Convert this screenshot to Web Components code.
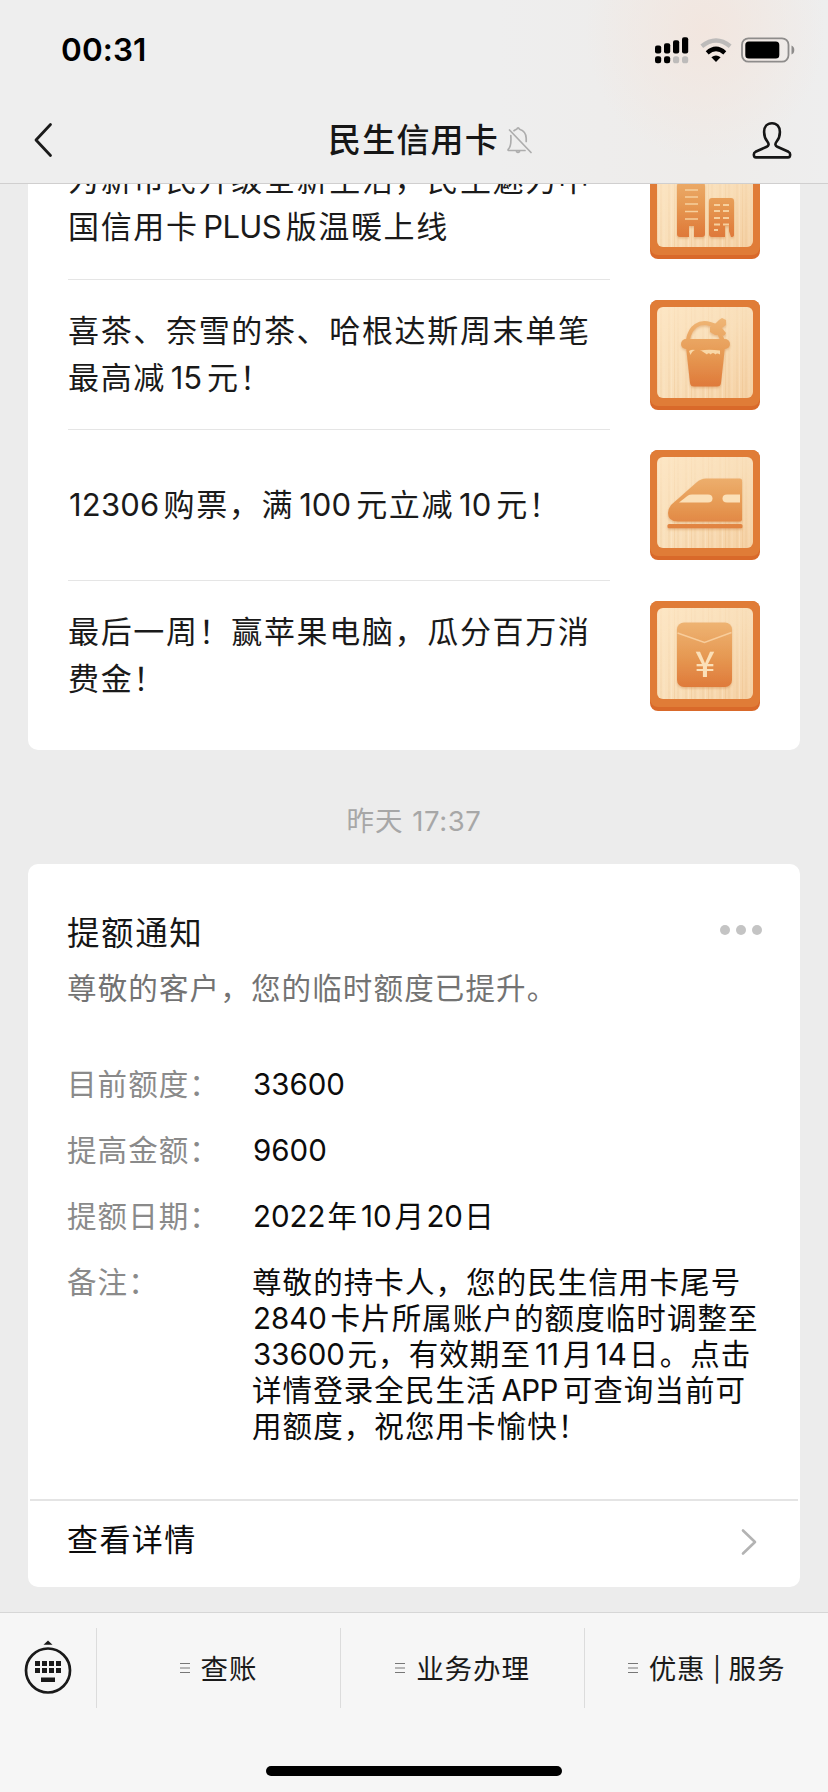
<!DOCTYPE html>
<html lang="zh-CN">
<head>
<meta charset="utf-8">
<title>民生信用卡</title>
<style>
html,body{margin:0;height:100%;overflow:hidden}
body{font-family:"Noto Sans CJK SC",Inter,sans-serif;color:#1a1a1a;background:#ececec}
</style>
</head>
<body>
<chat-screen></chat-screen>
<script>
const define=(name,html,init)=>customElements.define(name,class extends HTMLElement{
  constructor(){
    super();
    const t=document.createElement('template');
    t.innerHTML=html;
    this.attachShadow({mode:'open'}).append(t.content.cloneNode(true));
  }
  connectedCallback(){ if(init) init(this,this.shadowRoot); }
});

/* Latin or digit run inside Chinese text, with its own face and a fixed advance */
define('latin-run',`<style>
:host{display:inline-block;font-family:Inter,"Noto Sans CJK SC",sans-serif;line-height:1;white-space:nowrap;letter-spacing:var(--ls,0px);width:var(--w,auto);text-align:center}
:host([start]){text-align:left;text-indent:1px}
:host([end]){text-align:right}
</style><slot></slot>`);

define('status-bar',`<style>
:host{display:flex;justify-content:space-between;align-items:center;height:96px;padding:4px 33px 0 61px;box-sizing:border-box}
.time{font:600 31.5px/40px Inter,sans-serif;color:#000;letter-spacing:.1px;white-space:nowrap}
.icons{display:flex;align-items:center;gap:11px}
.battery{margin-left:-1.700px}
svg{display:block}
</style>
<span class="time">00:31</span>
<div class="icons">
<svg width="34" height="27" viewBox="0 0 34 27">
<g fill="#000"><rect x="0" y="8.5" width="6.2" height="8" rx="2"/><rect x="9" y="6.3" width="6.2" height="10.2" rx="2"/><rect x="18" y="3.3" width="6.2" height="13.2" rx="2"/><rect x="27" y=".3" width="6.2" height="16.2" rx="2"/><rect x="0" y="19.3" width="6.2" height="7" rx="2.2"/><rect x="9" y="19.3" width="6.2" height="7" rx="2.2"/></g>
<g fill="#bdbbba"><rect x="18" y="19.3" width="6.2" height="7" rx="2.6"/><rect x="27" y="19.3" width="6.2" height="7" rx="2.6"/></g></svg>
<svg width="32" height="25" viewBox="0 0 32 25">
<path d="M1.800 8.200Q16-3.400 30.200 8.200" fill="none" stroke="#bdbbba" stroke-width="4.400"/>
<path d="M7.200 14.800Q16 7 24.800 14.800" fill="none" stroke="#000" stroke-width="4.400"/>
<path d="M16 24L11.400 19.200Q16 15.600 20.600 19.200Z"/></svg>
<svg class="battery" width="54" height="26" viewBox="0 0 54 26"><rect x="1" y="1.300" width="46.500" height="23.400" rx="6.500" fill="none" stroke="#8e8c8b" stroke-width="1.800"/><rect x="4.300" y="4.500" width="34" height="17" rx="3.500"/><path d="M50.500 8.500q2.800 1 2.800 4.500t-2.800 4.500z" fill="#8e8c8b"/></svg>
</div>`);

define('nav-bar',`<style>
:host{display:grid;grid-template-columns:1fr auto 1fr;align-items:center;height:87px;padding:0 36px 0 34px;box-sizing:border-box}
svg{display:block}
.title{display:flex;align-items:center;gap:8px;padding-left:35px}
h1{margin:0 0 3px;font-size:33px;font-weight:500;line-height:44px;letter-spacing:1.200px;color:#161616;white-space:nowrap}
.person{justify-self:end}
</style>
<svg width="20" height="36" viewBox="0 0 20 36"><path d="M16.500 2.500L2 18l14.500 15.500" fill="none" stroke="#1a1a1a" stroke-width="2.800" stroke-linecap="round" stroke-linejoin="round"/></svg>
<div class="title"><h1><slot></slot></h1>
<svg width="26" height="28" viewBox="0 0 26 28" fill="none" stroke="#adadad" stroke-width="1.700" stroke-linecap="round" stroke-linejoin="round"><path d="M2.500 4L24 26.500M3.800 9.500C4.200 15 4.500 20.500 1.200 23.400q-.6 1.100 1 1.100H18M7 4.700Q8.500 3.700 9.600 3.300q1.500-2.800 3 0c4.800 1.700 6.600 5.500 6.600 9v3.200"/><path d="M9.500 25.700q1.500 1.300 3 0"/></svg></div>
<svg class="person" width="40" height="38" viewBox="0 0 40 38"><path d="M20 2.200c-5 0-7.900 3.800-7.900 8.700 0 4 1.500 7.500 3.400 9.900 1.800 2.200 1.200 4-.8 5L3.500 30.800C1 32 1.500 36.400 4 36.400h32c2.500 0 3-4.400.5-5.600L25.300 25.800c-2-1-2.600-2.800-.8-5 1.900-2.400 3.400-5.900 3.400-9.900 0-4.900-2.900-8.700-7.900-8.700z" fill="none" stroke="#161616" stroke-width="2.600" stroke-linejoin="round"/></svg>`);

/* Wooden tile with a carved pictogram */
const glyphs={
 city:`<path d="M27 37q0-4 4-4h20q4 0 4 4v48q0 3-3 3h-8V77h-5v11H30q-3 0-3-3z"/><path d="M59 52q0-3 3-3h19q3 0 3 3v34q0 2-3 2l-2-6V77h-4v11H62q-3 0-3-3z"/>
 <path d="M35 41h13M35 48h13M35 55h13M35 62.500h13M35 70h13" stroke="#f6cf9d" stroke-width="1.400"/><path d="M64 56h6M73 56h6M64 62h6M73 62h6M64 69h6M73 69h6M64 75.500h6M73 75.500h6M64 81h4" stroke="#f6cf9d" stroke-width="2"/>`,
 cup:`<path d="M38 40C40 26 50 21 60 24l6 2" fill="none" stroke="url(#f)" stroke-width="4"/><path d="M69 20l3-2 4 2 0 5-4 3 4 5q-1 4-5 2l-6 0-5-3 0-5 5-3z"/><path d="M69 33l4 8" stroke="url(#f)" stroke-width="4"/><rect x="31" y="39" width="49" height="10" rx="5"/><path d="M36 47h39l-4 36q-.5 3.500-4 3.500H44q-3.500 0-4-3.500z"/><path d="M39 51q3-2 6-1-3 1-4.500 5zM50 50.500q9-1.500 20 0v4q-3-2-4.500 0-2.500-3-5 0-2-2.500-3.500 0-4-3-7-4.500z" fill="#f9d8a8"/>`,
 train:`<path d="M90 28.500q2 0 2 2v39q0 2-2 2H28q-10 0-10-8.500 0-4 3-8L47 32q4-3.500 9-3.500z"/><rect x="17.500" y="74" width="75" height="4.200" rx="1.500"/><path d="M29 52.500l9-7q1.500-1 4-1h16q4.500 0 4.500 4t-4.500 4z" fill="#fbe0b8"/><path d="M90 44.500H77q-4.500 0-4.500 4t4.500 4h13z" fill="#fbe0b8"/>`,
 gift:`<rect x="27" y="21.500" width="55" height="64.500" rx="7"/><path d="M27.500 32L54.500 41.500 81.500 31.500" fill="none" stroke="#f8cd9b" stroke-width="1.500"/><text x="55" y="75.500" text-anchor="middle" font-family="Noto Sans CJK SC,sans-serif" font-size="35" font-weight="500" style="fill:#fbe0b8">¥</text>`};
define('wood-tile',`<style>:host{display:block;width:110px;height:110px}svg{display:block}</style><div></div>`,(el,root)=>{
 root.querySelector('div').innerHTML=`<svg width="110" height="110" viewBox="0 0 110 110"><defs>
 <linearGradient id="w" x2="1" y2="1"><stop stop-color="#fde6c4"/><stop offset=".5" stop-color="#f9dfba"/><stop offset="1" stop-color="#f5d0a3"/></linearGradient>
 <linearGradient id="f" gradientUnits="userSpaceOnUse" x1="0" y1="18" x2="0" y2="86"><stop stop-color="#efb676"/><stop offset=".55" stop-color="#e69953"/><stop offset="1" stop-color="#df7a3a"/></linearGradient>
 <linearGradient id="h" x2="0" y2="1"><stop stop-color="#fff" stop-opacity=".15"/><stop offset="1" stop-color="#fff"/></linearGradient>
 <mask id="m"><rect width="110" height="110" fill="url(#h)"/></mask>
 <pattern id="g" width="17" height="110" patternUnits="userSpaceOnUse"><path d="M2 0v110M7.500 0v110M11 0v110" stroke="#dfa763" stroke-width=".8" opacity=".28"/><path d="M4.500 0v110M14 0v110" stroke="#fff1d8" stroke-width="1" opacity=".35"/></pattern>
 <filter id="s" x="-20%" y="-20%" width="140%" height="140%"><feDropShadow dx="0" dy="1.500" stdDeviation="1" flood-color="#c87a3a" flood-opacity=".4"/></filter></defs>
 <rect width="110" height="110" rx="8" fill="#d9692a"/><rect width="110" height="106" rx="8" fill="#e07c37"/>
 <rect x="7" y="7" width="96" height="91" rx="6" fill="url(#w)"/><rect x="7" y="7" width="96" height="91" rx="6" fill="url(#g)" mask="url(#m)"/>
 <g fill="url(#f)" filter="url(#s)">${glyphs[el.getAttribute('kind')]}</g></svg>`;
});

define('article-row',`<style>
:host{display:flex;justify-content:space-between;align-items:center;height:150.6px;padding:0 40px;box-sizing:border-box;--line:#e5e5e5}
:host([last]){--line:transparent}
.text{align-self:stretch;width:542px;display:flex;align-items:center;padding-bottom:5px;box-sizing:border-box;border-bottom:1px solid var(--line);font-size:31px;line-height:47px;letter-spacing:1.660px;white-space:nowrap}
</style><div class="text"><div><slot></slot></div></div><slot name="tile"></slot>`);

define('chat-card',`<style>:host{display:block;margin:0 28px;background:#fff;border-radius:10px;overflow:hidden}</style><slot></slot>`);

define('time-stamp',`<style>
:host{display:flex;justify-content:center;align-items:flex-start;height:114px;padding-top:53px;box-sizing:border-box;font-size:27.500px;letter-spacing:1px;color:#a7a7a7;line-height:32px}
div{white-space:nowrap}</style><div><slot></slot></div>`);

/* Inter leads the font stack, so the line box stays within the 36px leading */
define('detail-row',`<style>
:host{display:grid;grid-template-columns:185px 1fr;font-family:Inter,"Noto Sans CJK SC",sans-serif;line-height:36px;font-size:29.500px;letter-spacing:1.080px;padding-top:2px;margin-bottom:28px;white-space:nowrap}
.k{color:#8a8a8a}.v{color:#0c0c0c}
</style><span class="k"><slot name="k"></slot></span><span class="v"><slot></slot></span>`);

define('notice-head',`<style>
:host{display:block;padding:44px 0 0}
.top{display:flex;justify-content:space-between;align-items:center;height:46px;padding-right:38px}
h2{margin:0;font-size:32.500px;font-weight:400;line-height:46px;letter-spacing:1.600px;color:#161616}
.dots{display:flex;gap:6px;padding-bottom:2px}i{width:10px;height:10px;border-radius:50%;background:#c4c4c4}
p{margin:14px 0 60px;font-size:29.500px;line-height:36px;letter-spacing:1.150px;color:#737373}
</style><div class="top"><h2><slot></slot></h2><div class="dots"><i></i><i></i><i></i></div></div><p><slot name="sub"></slot></p>`);

define('more-link',`<style>
:host{display:flex;justify-content:space-between;align-items:center;height:88px;margin:0 2px;padding:0 40px 10px 37px;box-sizing:border-box;border-top:2px solid #e4e4e4;font-size:31px;letter-spacing:1.400px;color:#0c0c0c}
span{line-height:40px;margin-top:-2px}svg{display:block;margin-top:6px}
</style><span><slot></slot></span><svg width="18" height="28" viewBox="0 0 18 28"><path d="M3 2.500L15 14 3 25.500" fill="none" stroke="#b3b3b3" stroke-width="2.600" stroke-linejoin="round" stroke-linecap="round"/></svg>`);

define('menu-item',`<style>
:host{flex:1 1 0;display:flex;justify-content:center;align-items:center;gap:11px;height:80px;border-left:1px solid #dcdcdc;box-sizing:border-box;font-size:27.500px;letter-spacing:.9px;color:#1a1a1a}
svg{display:block}span{line-height:36px;white-space:nowrap;margin-top:-3px}
</style><svg width="10" height="12" viewBox="0 0 10 12"><path d="M0 1.500h10M0 6h10M0 10.500h10" stroke="#777" stroke-width="1"/></svg><span><slot></slot></span>`);

define('menu-bar',`<style>
:host{display:block;height:180px;background:#f6f6f6;border-top:1px solid #d6d6d6;box-sizing:border-box}
.row{display:flex;padding-top:15px}.kb{width:96px;height:80px;display:flex;justify-content:center;align-items:center}
.home{width:296px;height:10px;border-radius:5px;background:#000;margin:58px auto 0}svg{display:block}
</style><div class="row"><div class="kb"><svg width="48" height="56" viewBox="0 0 48 56"><path d="M24 0.500L28.500 4.800h-9z" fill="#1a1a1a"/><circle cx="24" cy="30.500" r="22" fill="none" stroke="#1a1a1a" stroke-width="2.700"/><g fill="#1a1a1a"><path d="M11 21h5v5h-5zM18 21h5v5h-5zM25 21h5v5h-5zM32 21h5v5h-5zM11 28h5v5h-5zM18 28h5v5h-5zM25 28h5v5h-5zM32 28h5v5h-5zM17 37.400h14v4.500H17z"/></g></svg></div><slot></slot></div><div class="home"></div>`);

define('chat-screen',`<style>
:host{display:grid;grid-template-rows:184px 1428px 180px;width:828px;height:1792px;background:#ececec;overflow:hidden}
header{border-bottom:1px solid #d0cfcf;box-sizing:border-box;background:radial-gradient(ellipse 120px 130px at 705px 30px,#f2e6df,#f1e9e400),linear-gradient(90deg,#eee 0 60%,#eeecea 85%,#eee)}
main{overflow:hidden}
.first{margin-top:-55px;padding-bottom:18.600px}
.body{padding:0 0 0 39px}
.rows{padding-bottom:27px}
.bar{font-size:24px;position:relative;top:-1px}
</style>
<header><status-bar></status-bar><nav-bar>民生信用卡</nav-bar></header>
<main>
<chat-card class="first">
<article-row>为新市民升级全新生活，民生魅力中<br>国信用卡<latin-run style="--w:87px;--ls:-.6px">PLUS</latin-run>版温暖上线<wood-tile slot="tile" kind="city"></wood-tile></article-row>
<article-row>喜茶、奈雪的茶、哈根达斯周末单笔<br>最高减<latin-run style="--w:41px">15</latin-run>元！<wood-tile slot="tile" kind="cup"></wood-tile></article-row>
<article-row><latin-run start style="--w:95.500px;--ls:.2px">12306</latin-run>购票，满<latin-run style="--w:62px">100</latin-run>元立减<latin-run style="--w:42px">10</latin-run>元！<wood-tile slot="tile" kind="train"></wood-tile></article-row>
<article-row last>最后一周！赢苹果电脑，瓜分百万消<br>费金！<wood-tile slot="tile" kind="gift"></wood-tile></article-row>
</chat-card>
<time-stamp>昨天<latin-run end style="--w:78px;--ls:.6px">17:37</latin-run></time-stamp>
<chat-card>
<div class="body">
<notice-head>提额通知<span slot="sub">尊敬的客户，您的临时额度已提升。</span></notice-head>
<div class="rows">
<detail-row><span slot="k">目前额度：</span><latin-run start>33600</latin-run></detail-row>
<detail-row><span slot="k">提高金额：</span><latin-run start>9600</latin-run></detail-row>
<detail-row><span slot="k">提额日期：</span><latin-run start style="--w:75.500px">2022</latin-run>年<latin-run style="--w:36.500px">10</latin-run>月<latin-run style="--w:39px">20</latin-run>日</detail-row>
<detail-row><span slot="k">备注：</span>尊敬的持卡人，您的民生信用卡尾号<br><latin-run start style="--w:78.500px">2840</latin-run>卡片所属账户的额度临时调整至<br><latin-run start style="--w:95.500px">33600</latin-run>元，有效期至<latin-run style="--w:32px">11</latin-run>月<latin-run style="--w:35.500px">14</latin-run>日。点击<br>详情登录全民生活<latin-run style="--w:66px;--ls:-.6px">APP</latin-run>可查询当前可<br>用额度，祝您用卡愉快！</detail-row>
</div></div>
<more-link>查看详情</more-link>
</chat-card>
</main>
<menu-bar><menu-item>查账</menu-item><menu-item>业务办理</menu-item><menu-item>优惠 <latin-run class="bar" style="--w:9px">|</latin-run> 服务</menu-item></menu-bar>`);
</script>
</body>
</html>
